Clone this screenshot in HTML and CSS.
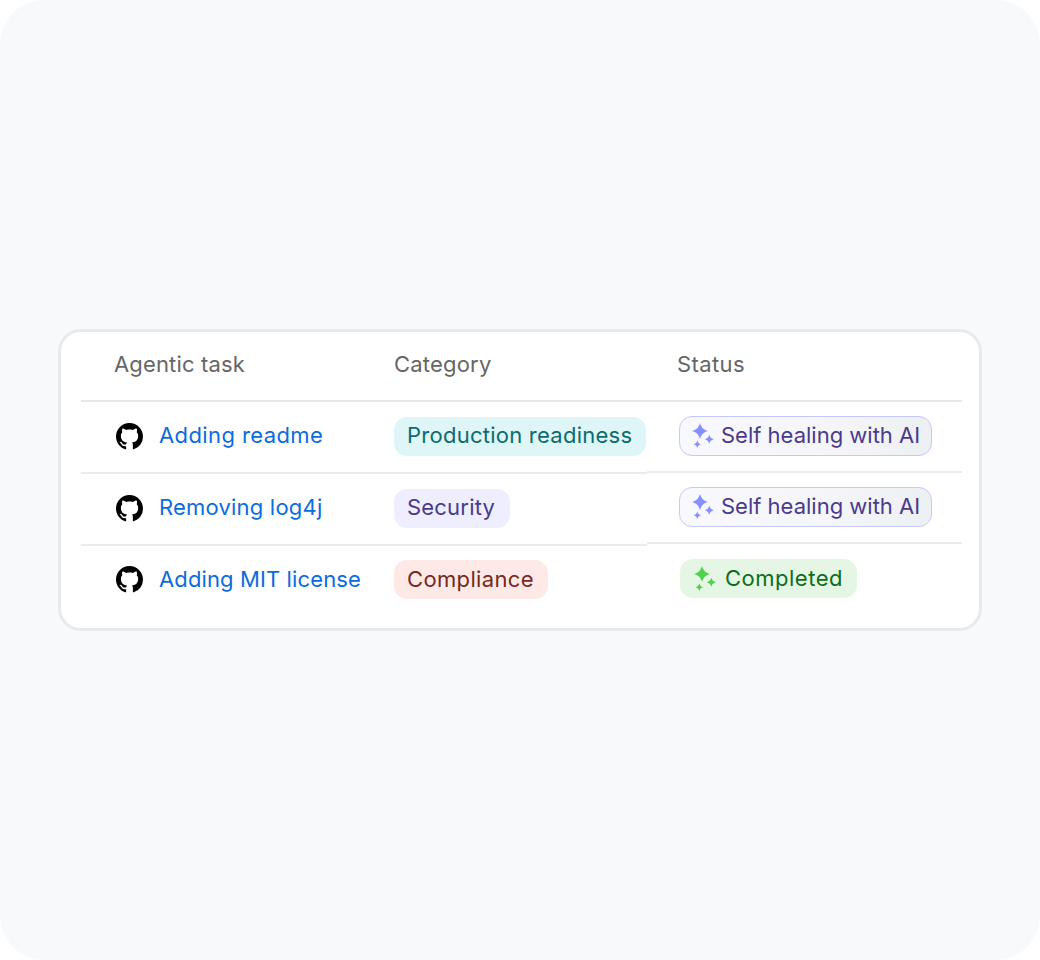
FILE: index.html
```html
<!DOCTYPE html>
<html lang="en">
<head>
<meta charset="utf-8">
<title>Agentic tasks</title>
<link rel="stylesheet" href="styles.css">
</head>
<body>
<svg class="defs" width="0" height="0" aria-hidden="true">
  <defs>
    <path id="star" d="M0-10C2-4 4-2 10 0 4 2 2 4 0 10-2 4-4 2-10 0-4-2-2-4 0-10Z"/>
    <g id="sparkles">
      <use href="#star" transform="translate(8 10) scale(.8)"/>
      <use href="#star" transform="translate(17.3 18.3) scale(.45)"/>
      <use href="#star" transform="translate(5.3 23.3) scale(.38)"/>
    </g>
    <path id="github" d="M8 0C3.58 0 0 3.58 0 8c0 3.54 2.29 6.53 5.47 7.59.4.07.55-.17.55-.38 0-.19-.01-.82-.01-1.49-2.01.37-2.53-.49-2.69-.94-.09-.23-.48-.94-.82-1.13-.28-.15-.68-.52-.01-.53.63-.01 1.08.58 1.23.82.72 1.21 1.87.87 2.33.66.07-.52.28-.87.51-1.07-1.78-.2-3.64-.89-3.64-3.95 0-.87.31-1.59.82-2.15-.08-.2-.36-1.02.08-2.12 0 0 .67-.21 2.2.82.64-.18 1.32-.27 2-.27.68 0 1.36.09 2 .27 1.53-1.04 2.2-.82 2.2-.82.44 1.1.16 1.92.08 2.12.51.56.82 1.27.82 2.15 0 3.07-1.87 3.75-3.65 3.95.29.25.54.73.54 1.48 0 1.07-.01 1.93-.01 2.2 0 .21.15.46.55.38A8.013 8.013 0 0016 8c0-4.42-3.58-8-8-8z"/>
  </defs>
</svg>
<main class="panel">
  <section class="card">
    <div class="col col-task">
      <div class="head">Agentic task</div>
      <div class="cell"><svg class="gh" viewBox="0 0 16 16"><use href="#github"/></svg><a class="link link-wide">Adding readme</a></div>
      <div class="cell"><svg class="gh" viewBox="0 0 16 16"><use href="#github"/></svg><a class="link">Removing log4j</a></div>
      <div class="cell last"><svg class="gh" viewBox="0 0 16 16"><use href="#github"/></svg><a class="link link-tight">Adding MIT license</a></div>
    </div>
    <div class="col col-cat">
      <div class="head">Category</div>
      <div class="cell"><span class="pill teal">Production readiness</span></div>
      <div class="cell"><span class="pill violet">Security</span></div>
      <div class="cell last"><span class="pill red">Compliance</span></div>
    </div>
    <div class="col col-status">
      <div class="head">Status</div>
      <div class="cell"><span class="pill heal"><svg class="spark" viewBox="0 0 24 28"><use href="#sparkles"/></svg>Self healing with AI</span></div>
      <div class="cell"><span class="pill heal"><svg class="spark" viewBox="0 0 24 28"><use href="#sparkles"/></svg>Self healing with AI</span></div>
      <div class="cell last"><span class="pill done"><svg class="spark" viewBox="0 0 24 28"><use href="#sparkles"/></svg>Completed</span></div>
    </div>
  </section>
</main>
</body>
</html>
```
FILE: styles.css
```css
* { box-sizing: border-box; }
html, body { margin: 0; background: #fff; }
body { font-family: "Inter", "Liberation Sans", sans-serif; font-size: 22px; }
.defs { position: absolute; }
.panel {
  width: 1040px; height: 960px; background: #f8f9fb; border-radius: 44px;
  display: flex; align-items: center; justify-content: center;
}
.card {
  width: 924px; height: 302px; background: #fff;
  border: 3px solid #e7e9eb; border-radius: 23px;
  padding: 0 17px 0 20px; display: flex;
}
.col { display: flex; flex-direction: column; }
.col-task { width: 300px; }
.col-cat { width: 266px; }
.col-status { width: 315px; }
.head {
  height: 70px; padding-bottom: 4px; display: flex; align-items: center; color: #666;
  border-bottom: 2px solid #e8e8e8; letter-spacing: 0.15px;
}
.col-task .head { padding-left: 33px; }
.col-cat .head { padding-left: 13px; letter-spacing: 0.2px; }
.col-status .head { padding-left: 30px; letter-spacing: 0.4px; }
.cell {
  height: 72px; padding-bottom: 2px; display: flex; align-items: center;
  border-bottom: 2px solid #ebebeb;
}
.col-cat .cell { padding-left: 13px; }
.col-status .cell { height: 71px; padding-left: 32px; }
.cell.last { border-bottom: 0; padding-bottom: 5px; }
.col-status .cell.last { padding-bottom: 2px; }
.gh { width: 27px; height: 27px; margin-left: 35px; margin-right: 16px; fill: #000; }
.link { color: #0a6cdf; letter-spacing: 0.2px; padding-bottom: 2px; }
.link-wide { letter-spacing: 0.4px; }
.link-tight { letter-spacing: 0.12px; }
.pill {
  height: 39px; padding: 0 14px 2px 13px; border-radius: 13px;
  display: inline-flex; align-items: center; white-space: nowrap;
}
.teal { background: #def6f8; color: #0b6b6f; letter-spacing: 0.25px; }
.violet { background: #eeeefe; color: #4a3a8c; letter-spacing: 0.2px; padding-right: 15px; }
.red { background: #ffe9e6; color: #742a1f; letter-spacing: 0.35px; }
.heal {
  height: 40px; padding: 0 11px 2px 12px; color: #4a3a8c;
  border: 1px solid #c5c7ff; background: linear-gradient(90deg, #f8f8ff, #f5f6f9 55%, #edf0f2);
}
.done { background: #e5f7e4; color: #0c6e1c; margin-left: 1px; padding-left: 14px; letter-spacing: 0.5px; }
.spark { width: 24px; height: 28px; margin-right: 5px; fill: #8790ff; flex: none; }
.done .spark { fill: #4fd04f; margin-right: 7px; }
```
